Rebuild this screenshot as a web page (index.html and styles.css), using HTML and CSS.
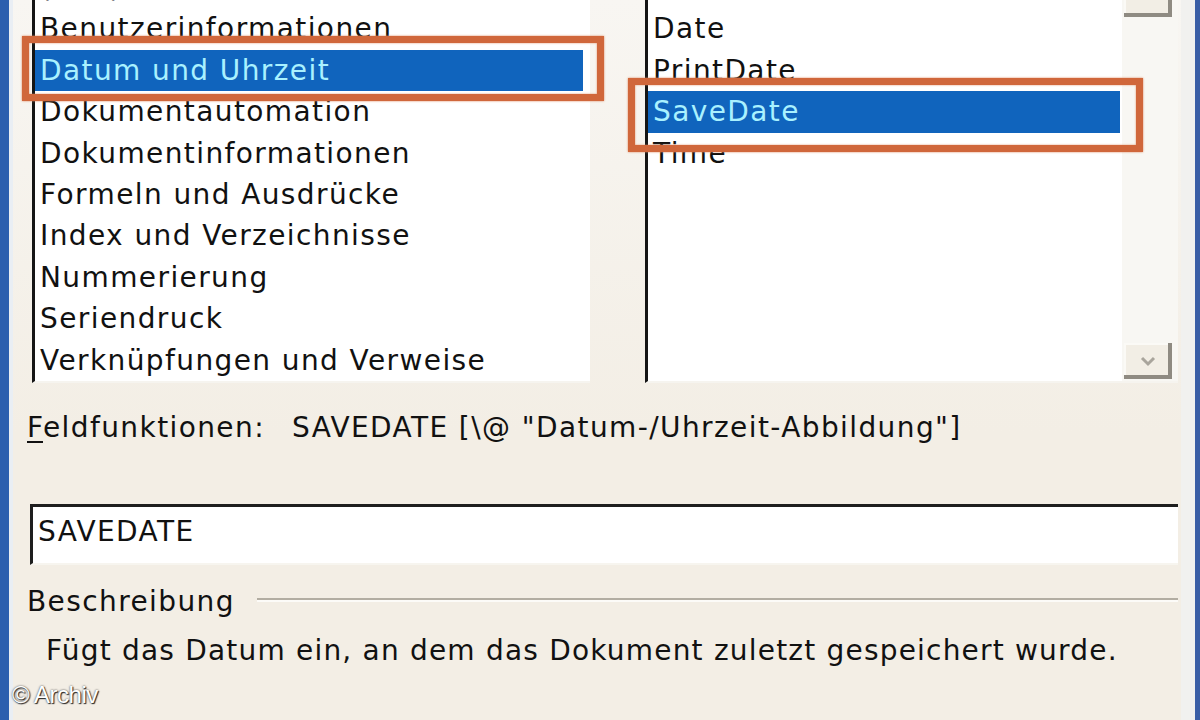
FILE: index.html
```html
<!DOCTYPE html>
<html lang="de">
<head>
    <meta charset="UTF-8">
    <title>Feld</title>
    <link rel="stylesheet" href="styles.css">
</head>
<body>
    <div class="window">
        <div class="lists">
            <ul class="listbox categories">
                <li>(Alle)</li>
                <li>Benutzerinformationen</li>
                <li class="selected">Datum und Uhrzeit</li>
                <li>Dokumentautomation</li>
                <li>Dokumentinformationen</li>
                <li>Formeln und Ausdrücke</li>
                <li>Index und Verzeichnisse</li>
                <li>Nummerierung</li>
                <li>Seriendruck</li>
                <li>Verknüpfungen und Verweise</li>
            </ul>

            <div class="listbox names">
                <ul>
                    <li>CreateDate</li>
                    <li>Date</li>
                    <li>PrintDate</li>
                    <li class="selected">SaveDate</li>
                    <li>Time</li>
                </ul>
                <div class="scrollbar">
                    <span class="sb-btn up"></span>
                    <span class="track"></span>
                    <span class="sb-btn down">
                        <svg width="20" height="14" viewBox="0 0 20 14"><path d="M4 4 L10 10 L16 4" fill="none" stroke="#a9a59c" stroke-width="3"/></svg>
                    </span>
                </div>
            </div>

            <!-- annotation frames -->
            <div class="mark mark-cat"></div>
            <div class="mark mark-name"></div>
        </div>

        <div class="codes">
            <span class="label"><u>F</u>eldfunktionen:</span>
            <span class="code">SAVEDATE [\@ "Datum-/Uhrzeit-Abbildung"]</span>
        </div>

        <div class="field">SAVEDATE</div>

        <div class="group">
            <span>Beschreibung</span>
            <span class="rule"></span>
        </div>
        <p class="description">Fügt das Datum ein, an dem das Dokument zuletzt gespeichert wurde.</p>

        <div class="credit">© Archiv</div>
    </div>
</body>
</html>
```

FILE: styles.css
```css
body {
    margin: 0;
    width: 1200px;
    height: 720px;
    overflow: hidden;
    background: #f3eee5;
    font-family: "DejaVu Sans", Verdana, sans-serif;
    font-size: 28px;
    letter-spacing: 1.4px;
    color: #111;
}

.window {
    position: relative;
    display: flow-root;
    height: 720px;
    box-sizing: border-box;
    border-left: 9px solid #2c5fae;
    border-right: 5px solid #3a5ea6;
    padding: 0 17px 0 23px;
    box-shadow: inset 4px 0 0 #e9eef4, inset -14px 0 0 #f1f1ef;
    background: linear-gradient(to bottom, #f8f6f2, #f3eee5 60%);
}

.lists {
    position: relative;
    display: flex;
    gap: 55px;
    margin-top: -33px;
}

.listbox {
    list-style: none;
    margin: 0;
    padding: 0;
    background: #fff;
    border-left: 3px solid #151515;
    border-bottom: 2px solid #f6f4ef;
}

.listbox li {
    height: 41.4px;
    line-height: 41.4px;
    padding-left: 5px;
    white-space: nowrap;
}

.listbox li.selected {
    background: #1064bd;
    color: #a9f1ff;
}

.categories {
    width: 555px;
    height: 414px;
}

.categories li {
    margin-right: 7px;
}

.names {
    display: flex;
    flex: 1;
    height: 414px;
}

.names ul {
    flex: 1;
    list-style: none;
    margin: 0;
    padding: 0;
}

.names li {
    margin-right: 2px;
}

.scrollbar {
    width: 56px;
    display: flex;
    flex-direction: column;
    background: #f8f7f3;
}

.sb-btn {
    display: flex;
    align-items: center;
    justify-content: center;
    margin: 0 6px 0 2px;
    background: #f2eee5;
    box-shadow: inset -4px -4px 0 #8f8b82, inset 2px 2px 0 #fbfaf6;
}

.sb-btn.up {
    height: 50px;
}

.sb-btn.down {
    height: 36px;
    margin-bottom: 2px;
}

.track {
    flex: 1;
}

.mark {
    position: absolute;
    border: 7px solid #d0673b;
    box-shadow: 0 0 2px #e08a60, inset 0 0 2px #e08a60;
}

.mark-cat {
    left: -10px;
    top: 69px;
    width: 568px;
    height: 51px;
}

.mark-name {
    left: 596px;
    top: 111px;
    width: 501px;
    height: 60px;
}

.codes {
    margin-top: 24px;
    line-height: 41px;
    margin-left: -5px;
    display: flex;
}

.codes .label {
    width: 265px;
}

.codes u {
    text-decoration-thickness: 2px;
    text-underline-offset: 4px;
}

.field {
    margin-top: 56px;
    height: 61px;
    box-sizing: border-box;
    background: #fff;
    border-top: 3px solid #1e1e1e;
    border-left: 3px solid #1e1e1e;
    border-bottom: 2px solid #f7f5ef;
    margin-left: -2px;
    padding: 4px 0 0 5px;
    line-height: 41px;
}

.group {
    display: flex;
    align-items: center;
    margin: 16px 0 0 -5px;
    line-height: 41px;
}

.group .rule {
    flex: 1;
    margin-left: 22px;
    margin-top: -4px;
    height: 2px;
    background: #b2ada2;
    border-bottom: 2px solid #fcfbf8;
}

.description {
    margin: 8px 0 0 14px;
    line-height: 41px;
    letter-spacing: 1.2px;
}

.credit {
    position: absolute;
    left: 3px;
    bottom: 11px;
    font-family: "Liberation Sans", Arial, sans-serif;
    font-size: 24px;
    letter-spacing: -0.5px;
    color: #fff;
    text-shadow: 0 0 2px #333, 1px 1px 1px #222;
}
```
